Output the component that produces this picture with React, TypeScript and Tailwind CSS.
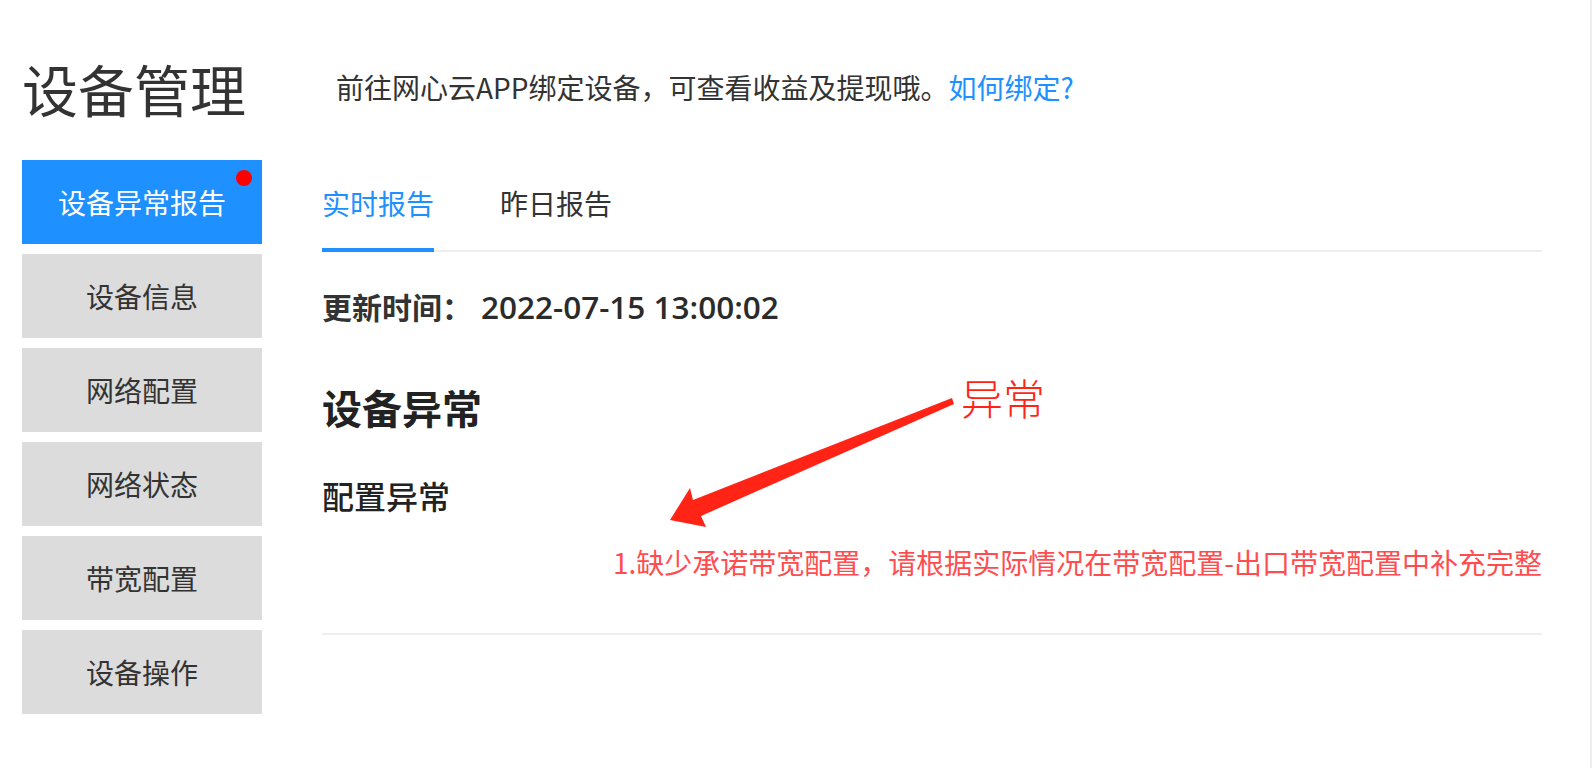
import React from "react";

const navItems = ["设备信息", "网络配置", "网络状态", "带宽配置", "设备操作"];

export default function App() {
  return (
    <div
      className="relative w-[1592px] h-[768px] overflow-hidden bg-white border-r-2 border-[#eeeeee] text-[#333333]"
      style={{ fontFamily: '"Noto Sans CJK SC", "Noto Sans", sans-serif' }}
    >
      <div className="flex">
        {/* Left column */}
        <div className="ml-[22px] w-[240px] shrink-0">
          <div className="mt-[58px] h-[60px] leading-[60px] text-[56px] text-[#333333] whitespace-nowrap">
            设备管理
          </div>
          <nav className="mt-[42px] flex flex-col gap-[10px]">
            <div className="relative h-[84px] flex items-center justify-center bg-[#1e90ff] text-white text-[28px]">
              设备异常报告
              <span className="absolute top-[10px] right-[10px] w-[16px] h-[16px] rounded-full bg-[#ff0000]" />
            </div>
            {navItems.map((t) => (
              <div
                key={t}
                className="h-[84px] flex items-center justify-center bg-[#dcdcdc] text-[#333333] text-[28px]"
              >
                {t}
              </div>
            ))}
          </nav>
        </div>

        {/* Right column */}
        <div className="ml-[60px] w-[1220px] shrink-0">
          <div className="mt-[67px] ml-[14px] h-[40px] leading-[40px] text-[28px] text-[#333333] whitespace-nowrap">
            前往网心云APP绑定设备，可查看收益及提现哦。
            <span className="text-[#1e90ff]">如何绑定?</span>
          </div>

          {/* Tabs */}
          <div className="mt-[76px] flex items-end gap-[66px] border-b-2 border-[#eeeeee]">
            <div className="-mb-[2px] pb-[25px] border-b-4 border-[#1e90ff] h-[69px] leading-[40px] text-[28px] text-[#1e90ff]">
              实时报告
            </div>
            <div className="-mb-[2px] pb-[25px] border-b-4 border-transparent h-[69px] leading-[40px] text-[28px] text-[#333333]">
              昨日报告
            </div>
          </div>

          <div className="mt-[34px] h-[40px] leading-[40px] text-[30px] text-[#333333] whitespace-nowrap flex items-baseline">
            <span className="font-bold">更新时间：</span>
            <span
              className="ml-[9px] text-[31.5px] font-semibold text-[#2b2b2b]"
              style={{ fontFamily: '"Open Sans", "Noto Sans", sans-serif' }}
            >
              2022-07-15 13:00:02
            </span>
          </div>

          <div className="mt-[55px] h-[52px] leading-[52px] text-[40px] font-bold text-[#222222]">
            设备异常
          </div>

          <div className="mt-[40px] h-[44px] leading-[44px] text-[32px] font-medium text-[#222222]">
            配置异常
          </div>

          <div className="mt-[25px] h-[40px] leading-[40px] text-[28px] text-right text-[#ff4d4f] whitespace-nowrap">
            1.缺少承诺带宽配置，请根据实际情况在带宽配置-出口带宽配置中补充完整
          </div>

          <div className="mt-[51px] border-b-2 border-[#eeeeee]" />
        </div>
      </div>

      {/* Annotation overlay */}
      <svg
        className="absolute left-0 top-0 pointer-events-none"
        width="1592"
        height="768"
        viewBox="0 0 1592 768"
      >
        <polygon
          points="670,520 690,488 693,500 952,398 954,404 701,516 706,527"
          fill="#ff2416"
        />
      </svg>
      <div className="absolute left-[961px] top-[372px] h-[50px] leading-[50px] text-[42px] font-light text-[#ff2416] whitespace-nowrap">
        异常
      </div>
    </div>
  );
}
